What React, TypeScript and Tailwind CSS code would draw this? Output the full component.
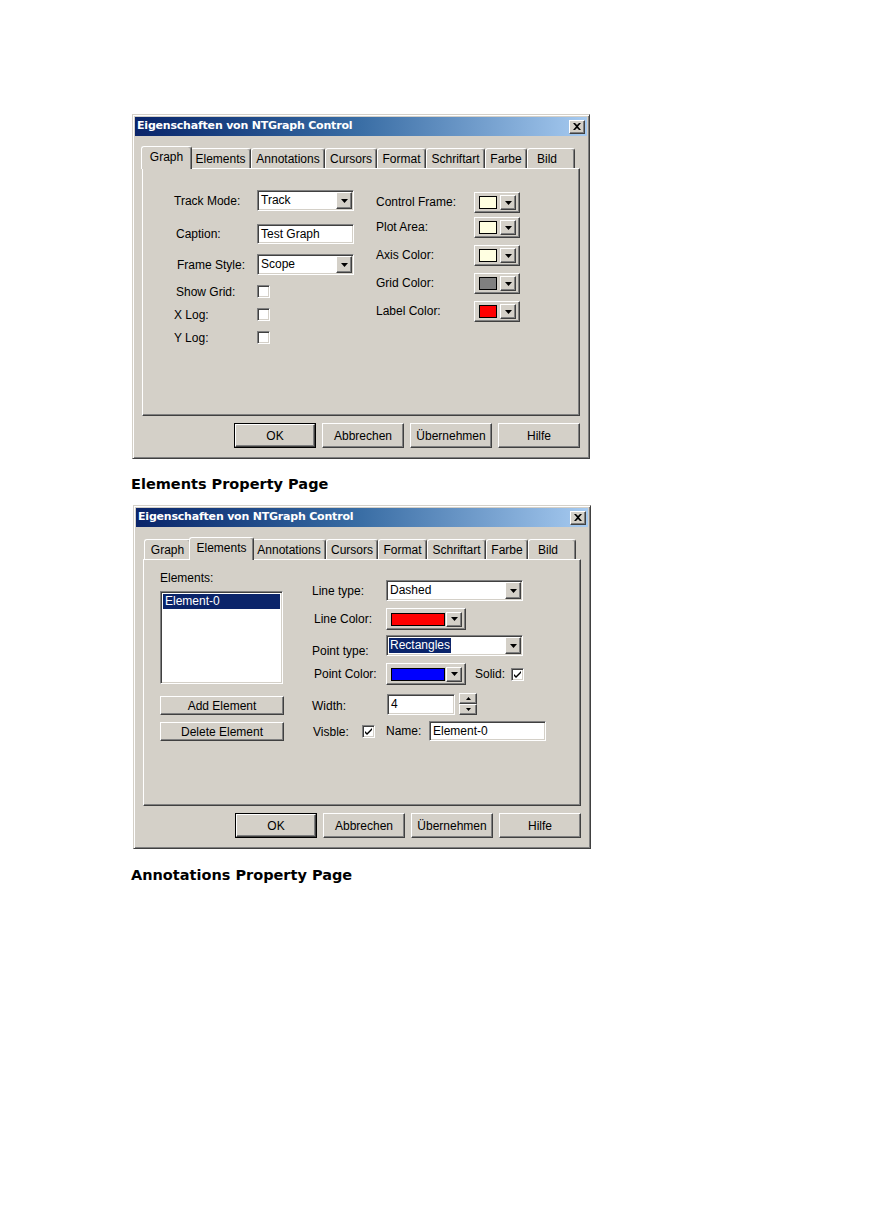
import React from 'react';

const raised =
  'border border-t-white border-l-white border-r-[#404040] border-b-[#404040] shadow-[inset_-1px_-1px_0_#808080]';
const sunken =
  'border border-t-[#808080] border-l-[#808080] border-r-white border-b-white shadow-[inset_1px_1px_0_#404040,inset_-1px_-1px_0_#d4d0c8]';

// tab widths measured from the screenshot
const TABS: { name: string; w: string; wSel: string; align?: string }[] = [
  { name: 'Graph', w: 'w-[47px]', wSel: 'w-[51px]' },
  { name: 'Elements', w: 'w-[61px]', wSel: 'w-[65px]' },
  { name: 'Annotations', w: 'w-[74px]', wSel: 'w-[78px]' },
  { name: 'Cursors', w: 'w-[52px]', wSel: 'w-[56px]' },
  { name: 'Format', w: 'w-[49px]', wSel: 'w-[53px]' },
  { name: 'Schriftart', w: 'w-[59px]', wSel: 'w-[63px]' },
  { name: 'Farbe', w: 'w-[42px]', wSel: 'w-[46px]' },
  { name: 'Bild', w: 'w-[48px]', wSel: 'w-[52px]', align: 'justify-start pl-[9px]' },
];

function DownArrow() {
  return (
    <svg width="7" height="4" viewBox="0 0 7 4">
      <path d="M0 0h7L3.5 4z" fill="#000" />
    </svg>
  );
}

function ArrowButton({ className = '' }: { className?: string }) {
  return (
    <div className={`${raised} bg-[#d4d0c8] flex items-center justify-center w-[16px] ${className}`}>
      <DownArrow />
    </div>
  );
}

function Combo({ value, width, selected }: { value: string; width: string; selected?: boolean }) {
  return (
    <div className={`${sunken} ${width} h-[21px] bg-white flex items-stretch p-[1px]`}>
      <div className="flex-1 flex items-center pl-[1px] overflow-hidden">
        {selected ? (
          <span className="bg-[#0a246a] text-white leading-[15px] px-[1px]">{value}</span>
        ) : (
          <span className="leading-[15px] pl-[1px]">{value}</span>
        )}
      </div>
      <ArrowButton />
    </div>
  );
}

function TextField({ value, width, height = 'h-[20px]' }: { value: string; width: string; height?: string }) {
  return (
    <div className={`${sunken} ${width} ${height} bg-white flex items-center pl-[3px]`}>
      <span className="leading-[15px]">{value}</span>
    </div>
  );
}

function CheckBox({ checked }: { checked?: boolean }) {
  return (
    <div className={`${sunken} w-[13px] h-[13px] bg-white flex items-center justify-center shrink-0`}>
      {checked && (
        <svg width="7" height="7" viewBox="0 0 7 7">
          <path d="M0 3l2 2 5-5v2l-5 5-2-2z" fill="#000" />
        </svg>
      )}
    </div>
  );
}

function ColorButton({ color, wide }: { color: string; wide?: boolean }) {
  return (
    <div
      className={`${raised} bg-[#d4d0c8] flex items-center p-[2px] ${
        wide ? 'w-[80px] h-[22px]' : 'w-[46px] h-[21px]'
      }`}
    >
      <div
        className={`border border-black ml-[2px] ${wide ? 'w-[54px] h-[13px]' : 'w-[18px] h-[13px]'}`}
        style={{ backgroundColor: color }}
      />
      <ArrowButton className="ml-auto h-[15px] mr-[1px]" />
    </div>
  );
}

function PushButton({ label, def, className = '' }: { label: string; def?: boolean; className?: string }) {
  return (
    <div className={`${def ? 'border border-black' : ''} ${className}`}>
      <div className={`${raised} bg-[#d4d0c8] h-full flex items-center justify-center`}>{label}</div>
    </div>
  );
}

function Spin() {
  return (
    <div className="flex flex-col w-[18px] h-[22px]">
      <div className={`${raised} bg-[#d4d0c8] h-[11px] flex items-center justify-center`}>
        <svg width="5" height="3" viewBox="0 0 5 3">
          <path d="M0 3h5L2.5 0z" fill="#000" />
        </svg>
      </div>
      <div className={`${raised} bg-[#d4d0c8] h-[11px] flex items-center justify-center`}>
        <svg width="5" height="3" viewBox="0 0 5 3">
          <path d="M0 0h5L2.5 3z" fill="#000" />
        </svg>
      </div>
    </div>
  );
}

function Dialog({
  active,
  panelHeight,
  className = '',
  children,
}: {
  active: string;
  panelHeight: string;
  className?: string;
  children: React.ReactNode;
}) {
  return (
    <div
      className={`w-[458px] bg-[#d4d0c8] border border-t-[#d4d0c8] border-l-[#d4d0c8] border-r-[#404040] border-b-[#404040] shadow-[inset_1px_1px_0_#fff,inset_-1px_-1px_0_#808080] p-[2px] ${className}`}
    >
      {/* title bar */}
      <div className="h-[19px] bg-gradient-to-r from-[#0a246a] via-[#3a6ea5] to-[#a6caf0] flex items-center pl-[2px] pr-[2px]">
        <span className="text-white font-bold text-[11px] font-['DejaVu_Sans',Verdana,sans-serif] tracking-[-0.2px]">
          Eigenschaften von NTGraph Control
        </span>
        <div className={`${raised} bg-[#d4d0c8] ml-auto w-[16px] h-[14px] flex items-center justify-center`}>
          <svg width="8" height="7" viewBox="0 0 8 7">
            <path d="M0 0h2l2 2 2-2h2L5 3.5 8 7H6L4 5 2 7H0l3-3.5z" fill="#000" />
          </svg>
        </div>
      </div>

      <div className="px-[7px] pt-[10px]">
        {/* tabs */}
        <div className="flex items-end h-[22px] pl-[1px]">
          {TABS.map((t) =>
            t.name === active ? (
              <div
                key={t.name}
                className={`${t.wSel} relative z-10 -mx-[2px] -mb-[1px] h-[23px] pb-[3px] bg-[#d4d0c8] border-t border-l border-t-white border-l-white border-r border-r-[#404040] shadow-[inset_-1px_0_0_#808080] rounded-t-[3px] flex items-center ${t.align ?? 'justify-center'}`}
              >
                {t.name}
              </div>
            ) : (
              <div
                key={t.name}
                className={`${t.w} h-[20px] border-t border-l border-t-white border-l-white border-r border-r-[#404040] shadow-[inset_-1px_0_0_#808080] rounded-t-[3px] flex items-center ${t.align ?? 'justify-center'}`}
              >
                {t.name}
              </div>
            )
          )}
        </div>
        {/* panel */}
        <div className={`${raised} ${panelHeight} bg-[#d4d0c8] w-[438px]`}>{children}</div>

        {/* buttons */}
        <div className="flex justify-end gap-[6px] pt-[7px] pb-[8px]">
          <PushButton label="OK" def className="w-[82px] h-[25px]" />
          <PushButton label="Abbrechen" className="w-[82px] h-[25px]" />
          <PushButton label="Übernehmen" className="w-[82px] h-[25px]" />
          <PushButton label="Hilfe" className="w-[82px] h-[25px]" />
        </div>
      </div>
    </div>
  );
}

function GraphPage() {
  const left = [
    { label: 'Track Mode:', pl: 'pl-[31px]', row: 'mt-[21px] h-[21px]', ctrl: <Combo value="Track" width="w-[97px]" /> },
    { label: 'Caption:', pl: 'pl-[33px]', row: 'mt-[13px] h-[20px]', ctrl: <TextField value="Test Graph" width="w-[97px]" /> },
    { label: 'Frame Style:', pl: 'pl-[34px]', row: 'mt-[10px] h-[21px]', ctrl: <Combo value="Scope" width="w-[97px]" /> },
    { label: 'Show Grid:', pl: 'pl-[33px]', row: 'mt-[10px] h-[13px]', ctrl: <CheckBox /> },
    { label: 'X Log:', pl: 'pl-[31px]', row: 'mt-[10px] h-[13px]', ctrl: <CheckBox /> },
    { label: 'Y Log:', pl: 'pl-[31px]', row: 'mt-[10px] h-[13px]', ctrl: <CheckBox /> },
  ];
  const right = [
    { label: 'Control Frame:', mt: 'mt-[23px]', color: '#ffffe1' },
    { label: 'Plot Area:', mt: 'mt-[4px]', color: '#ffffe1' },
    { label: 'Axis Color:', mt: 'mt-[7px]', color: '#ffffe1' },
    { label: 'Grid Color:', mt: 'mt-[7px]', color: '#808080' },
    { label: 'Label Color:', mt: 'mt-[7px]', color: '#ff0000' },
  ];
  return (
    <div className="flex">
      <div className="flex flex-col w-[233px]">
        {left.map((r) => (
          <div key={r.label} className={`flex items-center ${r.row}`}>
            <div className={`w-[114px] ${r.pl} leading-[14px]`}>{r.label}</div>
            {r.ctrl}
          </div>
        ))}
      </div>
      <div className="flex flex-col">
        {right.map((r) => (
          <div key={r.label} className={`flex items-center ${r.mt}`}>
            <div className="w-[98px] pb-[2px]">{r.label}</div>
            <ColorButton color={r.color} />
          </div>
        ))}
      </div>
    </div>
  );
}

function ElementsPage() {
  return (
    <div className="flex">
      <div className="flex flex-col w-[168px] pl-[16px]">
        <div className="mt-[11px] leading-[15px]">Elements:</div>
        <div className={`${sunken} mt-[5px] w-[123px] h-[93px] bg-white p-[2px]`}>
          <div className="bg-[#0a246a] text-white leading-[15px] pl-[2px]">Element-0</div>
        </div>
        <PushButton label="Add Element" className="mt-[12px] w-[124px] h-[19px]" />
        <PushButton label="Delete Element" className="mt-[7px] w-[124px] h-[19px]" />
      </div>
      <div className="flex flex-col">
        <div className="flex items-center mt-[20px]">
          <div className="w-[74px]">Line type:</div>
          <Combo value="Dashed" width="w-[137px]" />
        </div>
        <div className="flex items-center mt-[7px]">
          <div className="w-[74px] pl-[2px]">Line Color:</div>
          <ColorButton color="#ff0000" wide />
        </div>
        <div className="flex items-start mt-[5px] h-[24px]">
          <div className="w-[74px] pt-[7px]">Point type:</div>
          <Combo value="Rectangles" width="w-[137px]" selected />
        </div>
        <div className="flex items-center mt-[4px]">
          <div className="w-[74px] pl-[2px]">Point Color:</div>
          <ColorButton color="#0000ff" wide />
          <div className="ml-[9px] w-[36px]">Solid:</div>
          <CheckBox checked />
        </div>
        <div className="flex items-center mt-[8px]">
          <div className="w-[75px] pt-[3px]">Width:</div>
          <TextField value="4" width="w-[68px]" height="h-[21px]" />
          <div className="ml-[4px]">
            <Spin />
          </div>
        </div>
        <div className="flex items-center mt-[6px]">
          <div className="w-[50px] pl-[1px] pt-[1px]">Visble:</div>
          <CheckBox checked />
          <div className="ml-[11px] w-[43px]">Name:</div>
          <TextField value="Element-0" width="w-[117px]" />
        </div>
      </div>
    </div>
  );
}

export default function App() {
  return (
    <div className="min-h-[1228px] bg-white text-black text-[12px] font-['Liberation_Sans',Arial,sans-serif] pl-[131px] pt-[114px]">
      <Dialog active="Graph" panelHeight="h-[248px]" className="ml-[1px]">
        <GraphPage />
      </Dialog>
      <h2 className="mt-[17px] text-[14.5px] leading-[17px] font-bold font-['DejaVu_Sans',Verdana,sans-serif]">
        Elements Property Page
      </h2>
      <Dialog active="Elements" panelHeight="h-[247px]" className="ml-[2px] mt-[12px]">
        <ElementsPage />
      </Dialog>
      <h2 className="mt-[18px] text-[14.5px] leading-[17px] font-bold font-['DejaVu_Sans',Verdana,sans-serif]">
        Annotations Property Page
      </h2>
    </div>
  );
}
